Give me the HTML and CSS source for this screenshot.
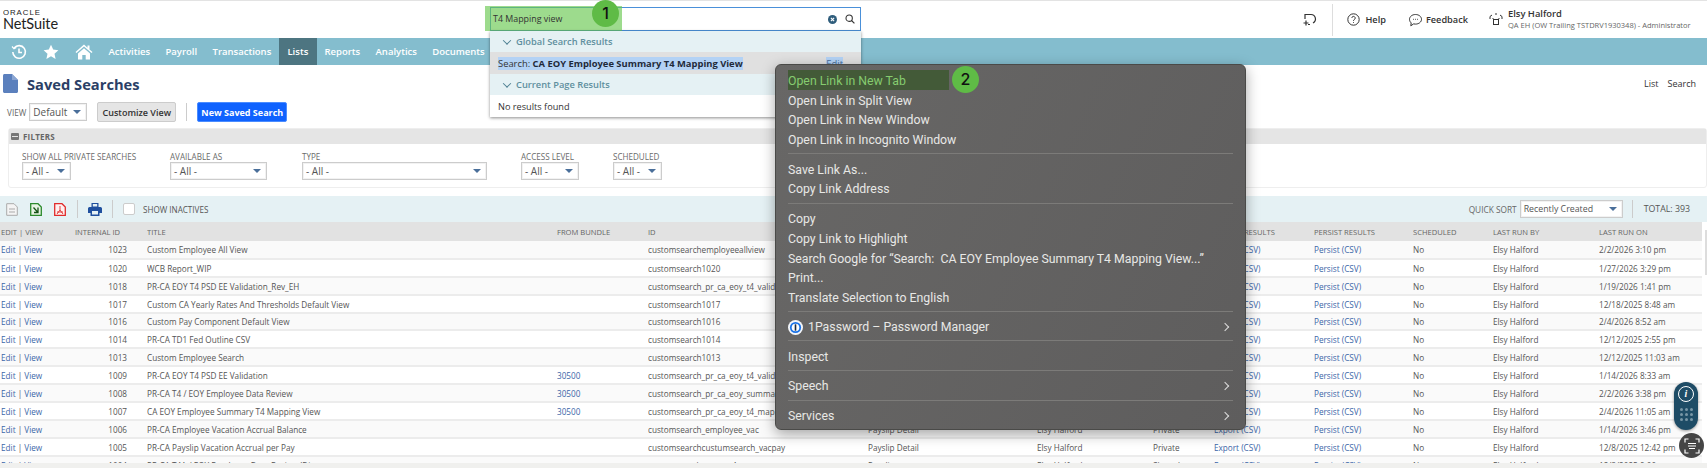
FILE: index.html
```html
<!DOCTYPE html>
<html lang="en">
<head>
<meta charset="UTF-8" />
<title>Saved Searches - NetSuite</title>
<link rel="stylesheet" href="styles.css">
</head>
<body>

<!-- top header -->
<header class="top-bar">
  <div class="logo">
    <span class="logo-oracle">ORACLE</span>
    <span class="logo-name">NetSuite</span>
  </div>
  <div class="top-actions">
    <svg class="ico-add" width="15" height="15" viewBox="0 0 15 15" fill="none" stroke="#333" stroke-width="1.2"><path d="M5 2.500h4a4.500 4.500 0 0 1 2 8.500M8 12.500H6M3 7V2.500h2"/><path d="M4 8.500v5M1.500 11h5"/></svg>
    <span class="top-sep"></span>
    <span class="top-link help"><svg width="13" height="13" viewBox="0 0 13 13" fill="none" stroke="#333"><circle cx="6.500" cy="6.500" r="5.700"/><path d="M4.800 5a1.700 1.700 0 1 1 2.500 1.600c-.6.300-.8.600-.8 1.300M6.500 9.200v.8"/></svg>Help</span>
    <span class="top-link feedback"><svg width="15" height="14" viewBox="0 0 15 14" fill="none" stroke="#333"><path d="M7.500 1.500c3.300 0 6 2.100 6 4.800s-2.700 4.800-6 4.800c-.7 0-1.300-.1-1.900-.2L2.800 12.800l.4-2.900C2.100 9 1.500 7.700 1.500 6.300c0-2.700 2.700-4.800 6-4.800z"/><path d="M5 6.300h.8M7.100 6.300h.8M9.200 6.300h.8"/></svg>Feedback</span>
    <svg class="ico-role" width="14" height="15" viewBox="0 0 14 15" fill="none" stroke="#333"><rect x="4.500" y="7.500" width="5" height="5"/><path d="M1 7V4.500L3 3M13 7V4.500L11 3M6 2h2M3.500 6.500h1M9.500 6.500h1"/></svg>
    <div class="user">
      <span class="user-name">Elsy Halford</span>
      <span class="user-role">QA EH (OW Trailing TSTDRV1930348) - Administrator</span>
    </div>
  </div>
</header>

<!-- main nav -->
<nav class="nav">
  <span class="nav-ico"><svg width="16" height="16" viewBox="0 0 16 16" fill="none" stroke="#fff" stroke-width="1.600"><path d="M3.200 4A6.300 6.300 0 1 1 1.800 8"/><path d="M1 2.500l2 2.200 2.300-1.300" stroke-width="1.200"/><path d="M8 4.500V8.500H11"/></svg></span>
  <span class="nav-ico"><svg width="16" height="16" viewBox="0 0 16 16" fill="#fff"><path d="M8 .8l2.200 4.800 5.200.6-3.900 3.500 1.100 5.200L8 12.300l-4.600 2.600 1.100-5.200L.6 6.200l5.200-.6z"/></svg></span>
  <span class="nav-ico"><svg width="18" height="16" viewBox="0 0 18 16" fill="#fff"><path d="M9 .5L.5 8l1 1L9 2.600 16.500 9l1-1-3-2.600V1.500h-2v2.200z"/><path d="M3 9.500L9 4.300l6 5.200V15.500H10.700V11H7.300v4.500H3z"/></svg></span>
  <a class="nav-item">Activities</a>
  <a class="nav-item">Payroll</a>
  <a class="nav-item">Transactions</a>
  <a class="nav-item active">Lists</a>
  <a class="nav-item">Reports</a>
  <a class="nav-item">Analytics</a>
  <a class="nav-item">Documents</a>
  <a class="nav-item">Setup</a>
  <a class="nav-item nav-support">Support</a>
</nav>

<main class="page">
  <div class="title-row">
    <div class="title-left">
      <svg width="15" height="19" viewBox="0 0 15 19"><path d="M0 1.500C0 .7.700 0 1.500 0H9l6 6v11.500c0 .8-.7 1.500-1.500 1.500h-12C.7 19 0 18.300 0 17.500z" fill="#5b80bd"/><path d="M9 0l6 6H9z" fill="#8aa5d2"/></svg>
      <h1>Saved Searches</h1>
    </div>
    <div class="title-links"><span>List</span><span>Search</span></div>
  </div>

  <div class="view-row">
    <span class="field-label">VIEW</span>
    <span class="select sel-view">Default<i class="caret"></i></span>
    <button class="btn btn-grey">Customize View</button>
    <span class="view-sep"></span>
    <button class="btn btn-blue">New Saved Search</button>
  </div>

  <section class="filters">
    <div class="filters-head"><span class="minus"></span>FILTERS</div>
    <div class="filters-body">
      <label class="filter f-private">SHOW ALL PRIVATE SEARCHES<span class="select">- All -<i class="caret"></i></span></label>
      <label class="filter f-available">AVAILABLE AS<span class="select">- All -<i class="caret"></i></span></label>
      <label class="filter f-type">TYPE<span class="select">- All -<i class="caret"></i></span></label>
      <label class="filter f-access">ACCESS LEVEL<span class="select">- All -<i class="caret"></i></span></label>
      <label class="filter f-sched">SCHEDULED<span class="select">- All -<i class="caret"></i></span></label>
    </div>
  </section>

  <div class="toolbar">
    <svg width="12" height="13" viewBox="0 0 12 13" fill="#f4f4f4" stroke="#aaa"><path d="M.7.700H8L11.300 4v8.300H.7z"/><path d="M3 6h6M3 9h6" /></svg>
    <svg width="12" height="13" viewBox="0 0 12 13" fill="#e8f3e4" stroke="#2d8a2d" stroke-width="1.300"><path d="M.7.700H8L11.300 4v8.300H.7z"/><path d="M3.500 4.500l4.500 5M8 4.500v5H4" stroke="#145214"/></svg>
    <svg width="12" height="13" viewBox="0 0 12 13" fill="#fff0f0" stroke="#e02b2b" stroke-width="1.300"><path d="M.7.700H8L11.300 4v8.300H.7z"/><path d="M6 3v4M6 7L3 11M6 7l3 4M3 9h6" stroke-width=".9"/></svg>
    <span class="tool-sep sep-a"></span>
    <svg class="ico-print" width="14" height="13" viewBox="0 0 14 13"><path d="M3.500 0h7v4h-7z" fill="#1f4f9e"/><path d="M1.500 4h11A1.500 1.500 0 0 1 14 5.500V10h-2.500v3h-9v-3H0V5.500A1.500 1.500 0 0 1 1.500 4z" fill="#1f4f9e"/><path d="M4 8h6v3.500H4zM4.800 1h4.400v2.400H4.800z" fill="#e5f1f4"/></svg>
    <span class="tool-sep sep-b"></span>
    <span class="check"></span>
    <span class="tool-label">SHOW INACTIVES</span>
    <span class="tool-right">
      <span class="field-label qs">QUICK SORT</span>
      <span class="select sel-sort">Recently Created<i class="caret"></i></span>
      <span class="tool-sep"></span>
      <span class="total">TOTAL: 393</span>
    </span>
  </div>

  <div class="list-wrap">
    <table class="list">
      <colgroup>
        <col class="c-edit"><col class="c-int"><col class="c-title"><col class="c-bundle"><col class="c-id"><col class="c-desc"><col class="c-owner"><col class="c-access"><col class="c-export"><col class="c-persist"><col class="c-sched"><col class="c-by"><col class="c-on">
      </colgroup>
      <thead>
        <tr><th>EDIT | VIEW</th><th>INTERNAL ID</th><th>TITLE</th><th>FROM BUNDLE</th><th>ID</th><th>DESCRIPTION</th><th>OWNER</th><th>ACCESS</th><th>EXPORT RESULTS</th><th>PERSIST RESULTS</th><th>SCHEDULED</th><th>LAST RUN BY</th><th>LAST RUN ON</th></tr>
      </thead>
      <tbody id="rows"></tbody>
    </table>
    <div class="scroll"><span class="scroll-thumb"></span></div>
  </div>
  <div class="page-foot"></div>
</main>

<!-- search box and its results, over the nav -->
<div class="search-box">
  <svg class="ico-clear" width="9" height="9" viewBox="0 0 10 10"><circle cx="5" cy="5" r="5" fill="#2f5d7c"/><path d="M3.200 3.200l3.600 3.600M6.800 3.200L3.200 6.800" stroke="#fff" stroke-width="1.200"/></svg>
  <svg class="ico-search" width="10" height="10" viewBox="0 0 12 12" fill="none" stroke="#333" stroke-width="1.300"><circle cx="5" cy="5" r="3.800"/><path d="M7.800 7.800l3.500 3.500"/></svg>
</div>
<div class="search-mark">T4 Mapping view</div>
<span class="badge badge-1">1</span>

<div class="search-drop">
  <div class="drop-head"><i class="chev"></i>Global Search Results</div>
  <div class="drop-hit"><span class="sel">Search: <b>CA EOY Employee Summary T4 Mapping View</b></span><span class="sel drop-edit">Edit</span></div>
  <div class="drop-head"><i class="chev"></i>Current Page Results</div>
  <div class="drop-none">No results found</div>
</div>

<!-- context menu -->
<div class="ctx">
  <div class="ctx-item ctx-first">Open Link in New Tab</div>
  <div class="ctx-item">Open Link in Split View</div>
  <div class="ctx-item">Open Link in New Window</div>
  <div class="ctx-item">Open Link in Incognito Window</div>
  <hr>
  <div class="ctx-item">Save Link As...</div>
  <div class="ctx-item">Copy Link Address</div>
  <hr>
  <div class="ctx-item">Copy</div>
  <div class="ctx-item">Copy Link to Highlight</div>
  <div class="ctx-item">Search Google for “Search:  CA EOY Employee Summary T4 Mapping View...”</div>
  <div class="ctx-item">Print...</div>
  <div class="ctx-item">Translate Selection to English</div>
  <hr>
  <div class="ctx-item ctx-sub ctx-pass"><svg class="onepass" width="15" height="15" viewBox="0 0 15 15"><circle cx="7.500" cy="7.500" r="7.500" fill="#f4f6fa"/><circle cx="7.500" cy="7.500" r="5.600" fill="#1a73e8"/><circle cx="7.500" cy="7.500" r="3.800" fill="#fff"/><rect x="6.700" y="4.300" width="1.600" height="6.400" fill="#1b2a3d"/></svg>1Password – Password Manager<i class="arrow"></i></div>
  <hr>
  <div class="ctx-item">Inspect</div>
  <hr>
  <div class="ctx-item ctx-sub">Speech<i class="arrow"></i></div>
  <hr>
  <div class="ctx-item ctx-sub">Services<i class="arrow"></i></div>
</div>
<span class="badge badge-2">2</span>

<!-- floating widgets -->
<div class="float-pill">
  <span class="pill-info">i</span>
  <span class="pill-dots"><i></i><i></i><i></i><i></i><i></i><i></i><i></i><i></i><i></i></span>
</div>
<div class="float-round">
  <svg width="16" height="16" viewBox="0 0 16 16" fill="none" stroke="#fff" stroke-width="1.200"><path d="M1 4.500V1h3.500M11.500 1H15v3.500M15 11.500V15h-3.500M4.500 15H1v-3.500"/><path d="M4 5.500h8M4 8h8M5 10.500h6"/></svg>
</div>

<script>
/* list rows: edit/view are the same everywhere, only the data differs */
var data = [
  ['1023','Custom Employee All View','','customsearchemployeeallview','','Elsy Halford','Private','2/2/2026 3:10 pm'],
  ['1020','WCB Report_WIP','','customsearch1020','','Elsy Halford','Private','1/27/2026 3:29 pm'],
  ['1018','PR-CA EOY T4 PSD EE Validation_Rev_EH','','customsearch_pr_ca_eoy_t4_validation_rev','','Elsy Halford','Private','1/19/2026 1:41 pm'],
  ['1017','Custom CA Yearly Rates And Thresholds Default View','','customsearch1017','','Elsy Halford','Private','12/18/2025 8:48 am'],
  ['1016','Custom Pay Component Default View','','customsearch1016','','Elsy Halford','Private','2/4/2026 8:52 am'],
  ['1014','PR-CA TD1 Fed Outline CSV','','customsearch1014','','Elsy Halford','Private','12/12/2025 2:55 pm'],
  ['1013','Custom Employee Search','','customsearch1013','','Elsy Halford','Private','12/12/2025 11:03 am'],
  ['1009','PR-CA EOY T4 PSD EE Validation','30500','customsearch_pr_ca_eoy_t4_validation','','Elsy Halford','Private','1/14/2026 8:33 am'],
  ['1008','PR-CA T4 / EOY Employee Data Review','30500','customsearch_pr_ca_eoy_summary','','Elsy Halford','Private','2/2/2026 3:38 pm'],
  ['1007','CA EOY Employee Summary T4 Mapping View','30500','customsearch_pr_ca_eoy_t4_mapping','','Elsy Halford','Private','2/4/2026 11:05 am'],
  ['1006','PR-CA Employee Vacation Accrual Balance','','customsearch_employee_vac','Payslip Detail','Elsy Halford','Private','1/14/2026 3:46 pm'],
  ['1005','PR-CA Payslip Vacation Accrual per Pay','','customsearchcustumsearch_vacpay','Payslip Detail','Elsy Halford','Private','12/8/2025 12:42 pm'],
  ['1004','PR-CA T4A / EOY Employee Data Review (Dist','','customsearch_pr_ca_t4a','Payslip','Elsy Halford','Shared','12/8/2025 9:00 am']
];
var body = document.getElementById('rows');
data.forEach(function (r, i) {
  var tr = document.createElement('tr');
  if (i === 4) tr.className = 'row-short';
  tr.innerHTML =
    '<td><a>Edit</a> | <a>View</a></td>' +
    '<td class="num">' + r[0] + '</td>' +
    '<td>' + r[1] + '</td>' +
    '<td><a>' + r[2] + '</a></td>' +
    '<td>' + r[3] + '</td>' +
    '<td>' + r[4] + '</td>' +
    '<td>' + r[5] + '</td>' +
    '<td>' + r[6] + '</td>' +
    '<td><a>Export (CSV)</a></td>' +
    '<td><a>Persist (CSV)</a></td>' +
    '<td>No</td>' +
    '<td>Elsy Halford</td>' +
    '<td>' + r[7] + '</td>';
  body.appendChild(tr);
});
</script>
</body>
</html>
```

FILE: styles.css
```css
*{box-sizing:border-box}
html,body{margin:0;height:100%}
body{width:1707px;height:468px;overflow:hidden;position:relative;background:#fff;
     font-family:"Open Sans",Arial,sans-serif;color:#4a4a4a;font-size:11px}

/* header */
.top-bar{height:38px;border-top:1px solid #e3e3e3;background:#fff;display:flex;justify-content:space-between;align-items:stretch}
.logo{display:flex;flex-direction:column;padding:8px 0 0 3px;color:#222}
.logo-oracle{font-family:"Liberation Sans",Arial,sans-serif;font-size:6.500px;line-height:7px;letter-spacing:.8px;transform-origin:left;transform:scaleX(1.200)}
.logo-name{font-family:"Lato",sans-serif;font-size:14.500px;line-height:16px;letter-spacing:-.1px}
.top-actions{display:flex;align-items:center;color:#333;font-weight:600}
.ico-add{margin-right:15px}
.top-sep{width:1px;height:32px;background:#ddd;margin-right:14px}
.top-link{display:flex;align-items:center;font-size:9.200px}
.help{margin-right:22px;gap:5px}
.feedback{margin-right:21px;gap:3px}
.ico-role{margin-right:5px}
.user{display:flex;flex-direction:column;width:199px}
.user-name{font-size:9.400px;line-height:12px}
.user-role{font-size:7.500px;line-height:11px;font-weight:400;color:#666;white-space:nowrap}

/* nav */
.nav{height:27px;background:#84bdce;display:flex;align-items:stretch;color:#fff;font-weight:600;font-size:9.500px}
.nav-ico{width:32.500px;display:flex;align-items:center;justify-content:center}
.nav-ico:first-child{margin-left:2.500px}
.nav-item{padding:0 7.700px;display:flex;align-items:center}
.nav-ico + .nav-item{padding-left:8.500px}
.nav-item.active{background:#4d7581;padding:0 8.500px}
.nav-support{margin-left:275px}

/* title */
.title-row{display:flex;justify-content:space-between;height:37px;align-items:center;padding:0 11px 0 3px}
.title-left{display:flex;align-items:center;gap:9px}
h1{margin:0;font-size:14.700px;font-weight:700;color:#2b3f66}
.title-links{display:flex;gap:9px;color:#333;font-size:9px}

.view-row{display:flex;align-items:center;height:20px;padding-left:7px}
.field-label{font-size:8.200px;color:#666;margin-right:3px}
.select{position:relative;display:block;height:18px;background:#fff;border:1px solid #ccc;padding-left:3px;
        font-size:10px;line-height:16px;color:#555;box-shadow:inset 0 0 0 1px #f2f2f2}
.caret{position:absolute;right:5px;top:6px;border-style:solid;border-width:4px 4.500px 0;border-color:#4a6f9a transparent transparent}
.sel-view{width:58px;margin-right:10px}
.btn{height:20px;border-radius:2px;font:600 9px "Open Sans",sans-serif;padding:0;white-space:nowrap}
.btn-grey{width:79px;background:#e5e5e5;border:1px solid #ccc;color:#333}
.btn-blue{width:90px;background:#0f62fe;border:1px solid #4a8cff;color:#fff;font-weight:700}
.view-sep{width:1px;height:18px;background:#ccc;margin:0 10px}

/* filters */
.filters{margin:6px 0 0 8px;height:60px;border:1px solid #eee;border-radius:3px}
.filters-head{height:15px;background:#e5e5e5;display:flex;align-items:center;gap:4px;padding-left:2px;
              font-size:8px;font-weight:700;color:#666;letter-spacing:.2px}
.minus{width:8px;height:7px;background:#777;border-radius:1px}
.minus::after{content:"";display:block;height:1px;margin:3px 1px 0;background:#e5e5e5}
.filters-body{display:flex;padding:7px 0 0 13px}
.filter{display:block;font-size:8.100px;line-height:11px;color:#6a6a6a}
.f-private{width:148px}
.f-private .select{width:49px}
.f-available{width:132px}
.f-available .select{width:97px}
.f-type{width:219px}
.f-type .select{width:185px}
.f-access{width:92px}
.f-access .select{width:58px}
.f-sched{width:49px}

/* toolbar */
.toolbar{margin-top:8px;height:26px;background:#e5f1f4;display:flex;align-items:center;padding-left:6px;gap:12px}
.tool-sep{width:1px;height:18px;background:#ccc}
.sep-a{margin-left:-1px}
.ico-print{margin-left:-2px}
.sep-b{margin-left:-2px}
.check{width:12px;height:12px;background:#fff;border:1px solid #ccc;border-radius:2px;margin-left:-2px}
.tool-label{font-size:8.100px;color:#555;margin-left:-4px}
.tool-right{margin-left:auto;display:flex;align-items:center;padding-right:17px}
.qs{margin-right:3px;font-size:8.300px}
.sel-sort{width:103px;margin-right:9px;font-size:8.800px}
.total{font-size:8.800px;color:#555;margin-left:11px}

/* list */
.list-wrap{display:flex;justify-content:space-between}
.list{width:1702px;table-layout:fixed;border-collapse:collapse}
.c-edit{width:75px}.c-int{width:72px}.c-title{width:410px}.c-bundle{width:91px}.c-id{width:220px}
.c-desc{width:169px}.c-owner{width:116px}.c-access{width:61px}.c-export{width:100px}.c-persist{width:99px}
.c-sched{width:80px}.c-by{width:106px}.c-on{width:103px}
.list th{height:19px;background:#e2e2e2;font-size:7.600px;font-weight:400;color:#666;text-align:left;padding:0;white-space:nowrap;overflow:hidden}
.list th:first-child,.list td:first-child{padding-left:1px}
.list td{height:18px;padding:0;white-space:nowrap;overflow:hidden;color:#555;font-size:8.200px;line-height:15px;border-bottom:2px solid #ececec}
.list tr.row-short td{height:17px}
.list tbody tr:nth-child(odd){background:#fafafa}
.list td.num{text-align:right;padding-right:20px}
.list a{color:#3b66a8}
.scroll{width:5px;background:#fff}
.scroll-thumb{display:block;width:2px;height:45px;margin:8px 0 0 3px;background:#ddd}
.page-foot{position:absolute;left:0;right:0;bottom:0;height:5px;background:#f0f0ee}

/* search overlay */
.search-box{position:absolute;left:490px;top:7px;width:371px;height:24px;background:#fff;border:1.500px solid #4a90d9;
            display:flex;align-items:center;justify-content:flex-end;gap:8px;padding-right:5px}
.search-mark{position:absolute;left:485px;top:6px;width:137px;height:25px;padding:6px 0 0 8px;background:rgba(104,200,80,.65);
             font-size:8.900px;line-height:14px;color:#333}
.badge{position:absolute;width:27px;height:27px;border-radius:50%;background:#5fbb46;color:#111;
       font:500 16px/27px "Inter",Arial,sans-serif;text-align:center}
.badge-1{left:592px;top:0}
.badge-2{left:952px;top:66px}

.search-drop{position:absolute;left:490px;top:31px;width:371px;height:86px;background:#fff;box-shadow:0 1px 3px rgba(0,0,0,.45)}
.drop-head{height:21px;background:#e5f1f4;display:flex;align-items:center;padding-left:14px;gap:6px;color:#5e8f9e;font-weight:600;font-size:9.300px}
.chev{width:6px;height:6px;border:solid #4d7f92;border-width:0 1.500px 1.500px 0;transform:rotate(45deg) translate(-1px,-1px)}
.drop-hit{height:22px;background:#e0e0e0;display:flex;justify-content:space-between;align-items:center;padding:0 18px 0 8px;font-size:9.400px;color:#333}
.drop-hit b{color:#1f2a3a}
.sel{background:#b3d2f5}
.drop-edit{color:#4a6f9a}
.drop-none{height:22px;display:flex;align-items:center;padding-left:8px;font-size:9.200px;color:#333}

/* context menu */
.ctx{position:absolute;left:775px;top:64px;width:471px;height:366px;padding:5px 12px 0 12px;border-radius:6px;
     background:linear-gradient(115deg,#686766,#5e5d5d);border:1px solid #4a4a48;
     box-shadow:0 4px 14px rgba(0,0,0,.35);color:#e8e8e6;font:400 12.300px/23px "Roboto",Arial,sans-serif}
.ctx hr{height:1px;margin:4.500px 0;border:0;background:#7c7b79}
.ctx-item{height:19.700px;white-space:pre}
.ctx-sub{display:flex;align-items:flex-start;position:relative}
.ctx-pass{margin-top:-.5px}
.onepass{margin:4px 5px 0 0;flex:none}
.arrow{position:absolute;right:5px;top:8px;width:6px;height:6px;border:solid #ddd;border-width:1.200px 1.200px 0 0;transform:rotate(45deg)}
.ctx-first{width:161px;background:#435a38;color:#86cc70}

/* floating widgets */
.float-pill{position:absolute;left:1674px;top:382px;width:24px;height:48px;border-radius:12px;background:#1e4c66;
            display:flex;flex-direction:column;align-items:center;padding-top:4px;box-shadow:0 1px 3px rgba(0,0,0,.4)}
.pill-info{width:16px;height:16px;border:1.200px solid #fff;border-radius:50%;color:#fff;font:italic 700 10px/14px "Liberation Serif",serif;text-align:center}
.pill-dots{display:grid;grid-template-columns:repeat(3,3px);gap:2px;margin-top:6px}
.pill-dots i{width:3px;height:3px;border-radius:50%;background:#7896a6}
.float-round{position:absolute;left:1679px;top:433px;width:25px;height:25px;border-radius:50%;background:#454545;
             display:flex;align-items:center;justify-content:center}
```
